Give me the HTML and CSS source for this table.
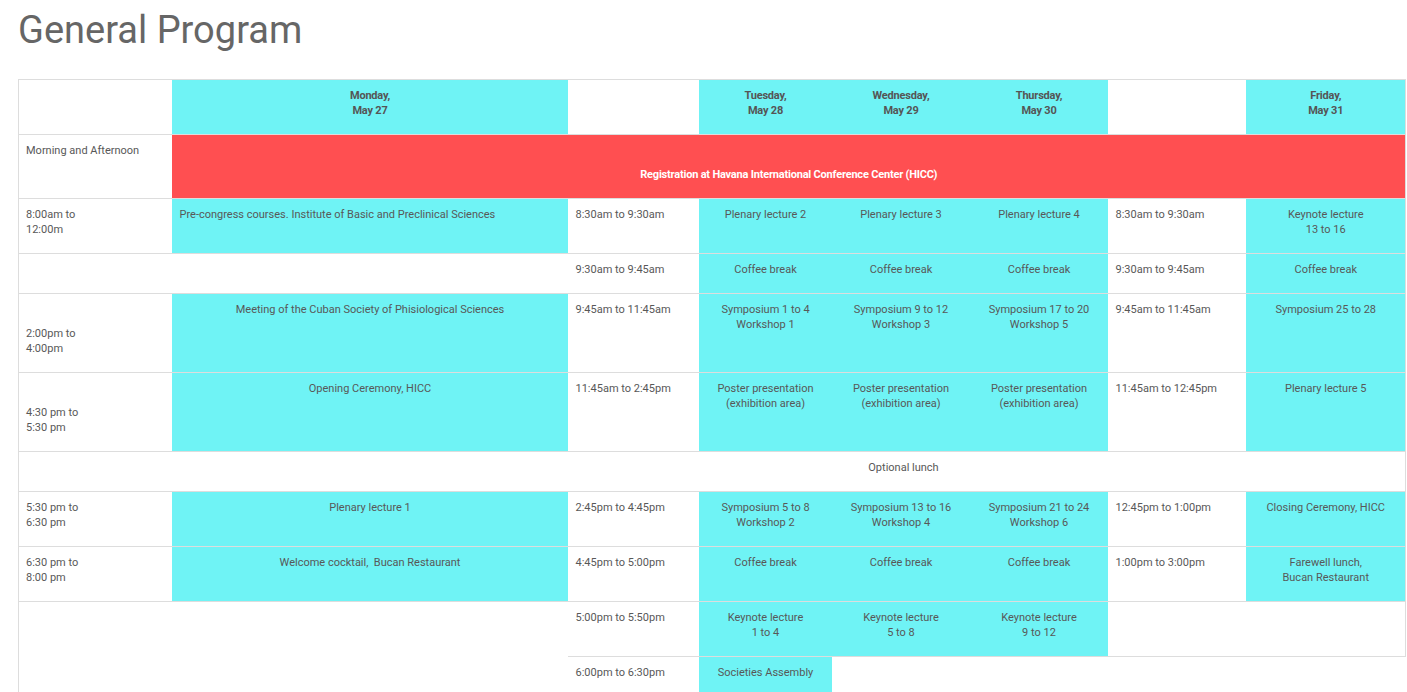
FILE: index.html
```html
<!DOCTYPE html>
<html lang="en">
<head>
<meta charset="utf-8">
<title>General Program</title>
<link rel="stylesheet" href="styles.css">
</head>
<body>
<div class="page">
  <h1 class="title">General Program</h1>
  <table class="program">
    <colgroup>
      <col class="w-time">
      <col class="w-mon">
      <col class="w-time2">
      <col class="w-tue">
      <col class="w-day">
      <col class="w-day">
      <col class="w-day">
      <col class="w-fri">
    </colgroup>
    <tr>
      <td></td>
      <td class="cy hd">Monday,<br>May 27</td>
      <td></td>
      <td class="cy hd">Tuesday,<br>May 28</td>
      <td class="cy hd">Wednesday,<br>May 29</td>
      <td class="cy hd">Thursday,<br>May 30</td>
      <td></td>
      <td class="cy hd">Friday,<br>May 31</td>
    </tr>
    <tr>
      <td>Morning and Afternoon</td>
      <td colspan="7" class="red low">Registration at Havana International Conference Center (HICC)</td>
    </tr>
    <tr>
      <td>8:00am to<br>12:00m</td>
      <td class="cy">Pre-congress courses. Institute of Basic and Preclinical Sciences</td>
      <td>8:30am to 9:30am</td>
      <td class="cy c">Plenary lecture 2</td>
      <td class="cy c">Plenary lecture 3</td>
      <td class="cy c">Plenary lecture 4</td>
      <td>8:30am to 9:30am</td>
      <td class="cy c">Keynote lecture<br>13 to 16</td>
    </tr>
    <tr>
      <td></td>
      <td></td>
      <td>9:30am to 9:45am</td>
      <td class="cy c">Coffee break</td>
      <td class="cy c">Coffee break</td>
      <td class="cy c">Coffee break</td>
      <td>9:30am to 9:45am</td>
      <td class="cy c">Coffee break</td>
    </tr>
    <tr>
      <td class="low">2:00pm to<br>4:00pm</td>
      <td class="cy c">Meeting of the Cuban Society of Phisiological Sciences</td>
      <td>9:45am to 11:45am</td>
      <td class="cy c">Symposium 1 to 4<br>Workshop 1</td>
      <td class="cy c">Symposium 9 to 12<br>Workshop 3</td>
      <td class="cy c">Symposium 17 to 20<br>Workshop 5</td>
      <td>9:45am to 11:45am</td>
      <td class="cy c">Symposium 25 to 28</td>
    </tr>
    <tr>
      <td class="low">4:30 pm to<br>5:30 pm</td>
      <td class="cy c">Opening Ceremony, HICC</td>
      <td>11:45am to 2:45pm</td>
      <td class="cy c">Poster presentation<br>(exhibition area)</td>
      <td class="cy c">Poster presentation<br>(exhibition area)</td>
      <td class="cy c">Poster presentation<br>(exhibition area)</td>
      <td>11:45am to 12:45pm</td>
      <td class="cy c">Plenary lecture 5</td>
    </tr>
    <tr>
      <td></td>
      <td></td>
      <td></td>
      <td colspan="3" class="c">Optional lunch</td>
      <td></td>
      <td></td>
    </tr>
    <tr>
      <td>5:30 pm to<br>6:30 pm</td>
      <td class="cy c">Plenary lecture 1</td>
      <td>2:45pm to 4:45pm</td>
      <td class="cy c">Symposium 5 to 8<br>Workshop 2</td>
      <td class="cy c">Symposium 13 to 16<br>Workshop 4</td>
      <td class="cy c">Symposium 21 to 24<br>Workshop 6</td>
      <td>12:45pm to 1:00pm</td>
      <td class="cy c">Closing Ceremony, HICC</td>
    </tr>
    <tr>
      <td>6:30 pm to<br>8:00 pm</td>
      <td class="cy c">Welcome cocktail,&nbsp; Bucan Restaurant</td>
      <td>4:45pm to 5:00pm</td>
      <td class="cy c">Coffee break</td>
      <td class="cy c">Coffee break</td>
      <td class="cy c">Coffee break</td>
      <td>1:00pm to 3:00pm</td>
      <td class="cy c">Farewell lunch,<br>Bucan Restaurant</td>
    </tr>
    <tr class="r10">
      <td rowspan="2" colspan="2"></td>
      <td>5:00pm to 5:50pm</td>
      <td class="cy c">Keynote lecture<br>1 to 4</td>
      <td class="cy c">Keynote lecture<br>5 to 8</td>
      <td class="cy c">Keynote lecture<br>9 to 12</td>
      <td></td>
      <td></td>
    </tr>
    <tr class="tail">
      <td>6:00pm to 6:30pm</td>
      <td class="cy c">Societies Assembly</td>
    </tr>
  </table>
</div>
</body>
</html>
```

FILE: styles.css
```css
html, body {
  margin: 0;
  padding: 0;
  background: #ffffff;
}

body {
  font-family: Roboto, "Liberation Sans", Arial, sans-serif;
  color: #585858;
}

.page {
  padding: 8px 0 0 18px;
}

.title {
  margin: 0 0 27px;
  font-size: 38px;
  font-weight: 400;
  line-height: normal;
  color: #666666;
}

.program {
  border-collapse: collapse;
  table-layout: fixed;
  width: 1387px;
  font-size: 11px;
  line-height: 15px;
  border-left: 1px solid #dddddd;
}

.w-time { width: 153px; }
.w-mon { width: 396px; }
.w-time2 { width: 131px; }
.w-tue { width: 133px; }
.w-day { width: 138px; }
.w-fri { width: 160px; }

.program td {
  border-top: 1px solid #dddddd;
  padding: 8px 7px 16px 8px;
  vertical-align: top;
  text-align: left;
}

.program tr:not(.tail) > td:first-child {
  padding-left: 7px;
}

.program tr:not(.tail) td:last-child {
  border-right: 1px solid #dddddd;
}

.program tr.r10 td {
  border-bottom: 1px solid #dddddd;
}

.program td.cy {
  background: #6ff3f5;
}

.program td.c {
  text-align: center;
}

.program td.hd {
  text-align: center;
  font-weight: 700;
  color: #555555;
  letter-spacing: -0.2px;
}

.program td.red {
  background: #ff4f51;
  color: #ffffff;
  font-weight: 700;
  text-align: center;
  letter-spacing: -0.2px;
}

.program td.low {
  padding-top: 32px;
}
```
